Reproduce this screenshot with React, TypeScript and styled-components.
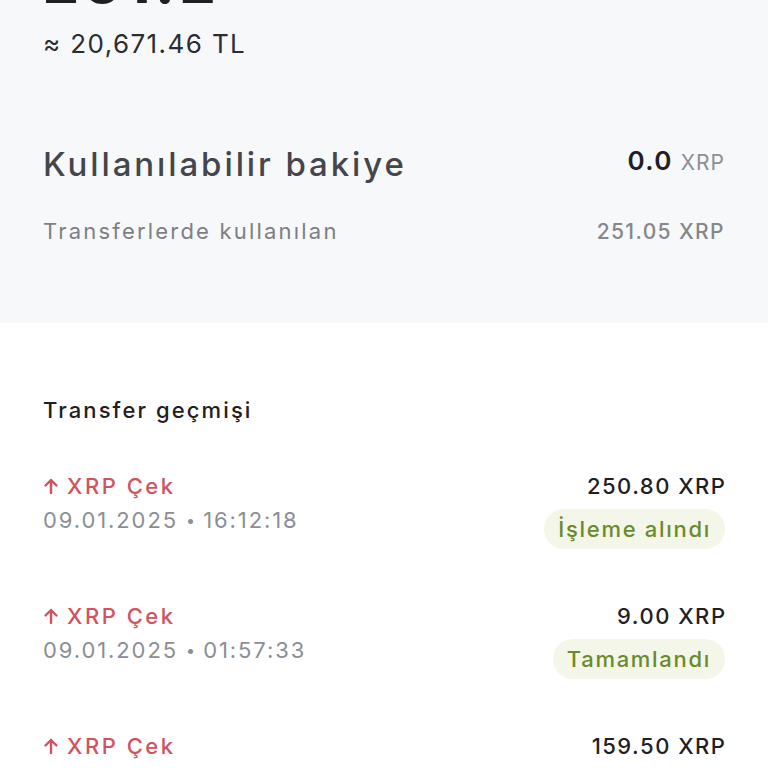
import styled, { createGlobalStyle } from 'styled-components';

const GlobalStyle = createGlobalStyle`
  html, body {
    margin: 0;
    padding: 0;
    background: #ffffff;
  }
  body {
    font-family: Inter, 'Noto Sans', sans-serif;
    -webkit-font-smoothing: antialiased;
  }
`;

interface ITransfer {
  amount: string;
  date: string;
  time: string;
  status?: string;
}

const transfers: ITransfer[] = [
  { amount: '250.80 XRP', date: '09.01.2025', time: '16:12:18', status: 'İşleme alındı' },
  { amount: '9.00 XRP', date: '09.01.2025', time: '01:57:33', status: 'Tamamlandı' },
  { amount: '159.50 XRP', date: '09.01.2025', time: '00:41:09' },
];

const ArrowUp = () => (
  <svg width="16" height="18" viewBox="0 0 16 18" fill="none">
    <path
      d="M8 16V3M2.5 8.5L8 3l5.5 5.5"
      stroke="currentColor"
      strokeWidth="2.4"
      strokeLinecap="round"
      strokeLinejoin="round"
    />
  </svg>
);

const TransferItem = ({ amount, date, time, status }: ITransfer) => {
  return (
    <TransferRow>
      <div>
        <TransferTitle>
          <ArrowUp />
          <span>XRP Çek</span>
        </TransferTitle>
        <TransferDate>
          {date} <span className="dot">•</span> {time}
        </TransferDate>
      </div>
      <TransferSide>
        <TransferAmount>{amount}</TransferAmount>
        {status && <StatusBadge>{status}</StatusBadge>}
      </TransferSide>
    </TransferRow>
  );
};

export default function App() {
  return (
    <>
      <GlobalStyle />
      <Page>
        <BalanceSection>
          <BigAmount>251.2</BigAmount>
          <Approx>≈ 20,671.46 TL</Approx>
          <AvailableRow>
            <AvailableLabel>Kullanılabilir bakiye</AvailableLabel>
            <AvailableValue>
              0.0 <span className="unit">XRP</span>
            </AvailableValue>
          </AvailableRow>
          <UsedRow>
            <span>Transferlerde kullanılan</span>
            <span>251.05 XRP</span>
          </UsedRow>
        </BalanceSection>
        <HistorySection>
          <HistoryTitle>Transfer geçmişi</HistoryTitle>
          <TransferList>
            {transfers.map((t) => (
              <TransferItem key={t.time} {...t} />
            ))}
          </TransferList>
        </HistorySection>
      </Page>
    </>
  );
}

const Page = styled.div`
  width: 768px;
  height: 768px;
  overflow: hidden;
  display: flex;
  flex-direction: column;
`;

const BalanceSection = styled.section`
  flex-shrink: 0;
  background-color: #f7f8fa;
  padding: 0 43px;
  height: 323px;
  box-sizing: border-box;
  display: flex;
  flex-direction: column;
`;

const BigAmount = styled.div`
  margin-top: -40px;
  height: 46px;
  font-size: 56px;
  font-weight: 800;
  line-height: 46px;
  color: #1f2024;
  letter-spacing: 5px;
`;

const Approx = styled.div`
  margin-top: 22px;
  font-size: 26px;
  color: #2b2d31;
  letter-spacing: 1.4px;
`;

const AvailableRow = styled.div`
  display: flex;
  justify-content: space-between;
  align-items: baseline;
  margin-top: 85px;
`;

const AvailableLabel = styled.div`
  font-size: 33px;
  font-weight: 500;
  color: #45464b;
  letter-spacing: 2.9px;
`;

const AvailableValue = styled.div`
  font-size: 26px;
  font-weight: 600;
  color: #1f2024;
  letter-spacing: 1.4px;
  transform: translateY(-6px);

  .unit {
    font-size: 21px;
    font-weight: 400;
    color: #8d8f94;
    letter-spacing: 1px;
  }
`;

const UsedRow = styled.div`
  display: flex;
  justify-content: space-between;
  align-items: baseline;
  margin-top: 34px;
  font-size: 22px;
  color: #7d7f85;
  letter-spacing: 2.2px;

  span:last-child {
    font-size: 21px;
    font-weight: 500;
    color: #85878c;
    letter-spacing: 1.4px;
  }
`;

const HistorySection = styled.section`
  background: #ffffff;
  padding: 74px 43px 0;
  flex: 1;
`;

const HistoryTitle = styled.h2`
  margin: 0;
  font-size: 22px;
  font-weight: 500;
  color: #1f2024;
  letter-spacing: 2.1px;
`;

const TransferList = styled.ul`
  list-style: none;
  margin: 48px 0 0;
  padding: 0;
  display: flex;
  flex-direction: column;
  gap: 34px;
`;

const TransferRow = styled.li`
  display: flex;
  justify-content: space-between;
  align-items: flex-start;
  min-height: 96px;
`;

const TransferTitle = styled.div`
  display: flex;
  align-items: center;
  gap: 8px;
  font-size: 22px;
  font-weight: 500;
  color: #d2535e;
  line-height: 30px;
  letter-spacing: 2.5px;
`;

const TransferDate = styled.div`
  margin-top: 4px;
  font-size: 22px;
  color: #8b8e94;
  line-height: 30px;
  letter-spacing: 1.9px;

  .dot {
    font-size: 16px;
    vertical-align: 2px;
    letter-spacing: 0;
  }
`;

const TransferSide = styled.div`
  display: flex;
  flex-direction: column;
  align-items: flex-end;
  gap: 8px;
`;

const TransferAmount = styled.div`
  font-size: 22px;
  font-weight: 500;
  color: #1f2024;
  line-height: 30px;
  letter-spacing: 1.5px;
  margin-right: -1.5px;
`;

const StatusBadge = styled.span`
  display: inline-flex;
  align-items: center;
  height: 40px;
  padding: 0 14px;
  border-radius: 20px;
  background-color: #f4f6e9;
  color: #6b8b2b;
  font-size: 22px;
  font-weight: 500;
  letter-spacing: 1.7px;
`;
